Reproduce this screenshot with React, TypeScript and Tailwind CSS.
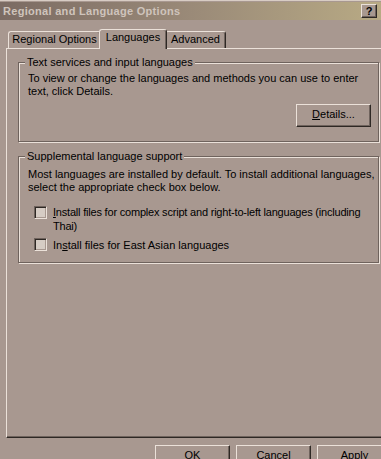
import React from 'react';

const face = 'bg-[#a89890]';

const Button: React.FC<{ children: React.ReactNode; className?: string }> = ({ children, className = '' }) => (
  <div
    className={`h-[23px] w-[75px] shrink-0 flex items-center justify-center pb-[2px] ${face} border border-t-[#ebe1d9] border-l-[#ebe1d9] border-b-[#2e2824] border-r-[#2e2824] shadow-[inset_-1px_-1px_0_#6f635d] ${className}`}
  >
    {children}
  </div>
);

const Checkbox: React.FC = () => (
  <div className="w-[13px] h-[13px] shrink-0 bg-[#d6ccc4] border border-t-[#6f635d] border-l-[#6f635d] border-b-[#ebe1d9] border-r-[#ebe1d9] shadow-[inset_1px_1px_0_#2e2824,inset_-1px_-1px_0_#a89890]" />
);

const GroupBox: React.FC<{ title: string; className?: string; children: React.ReactNode }> = ({ title, className = '', children }) => (
  <div className={`relative w-[361px] border border-[#6f635d] shadow-[inset_1px_1px_0_#ebe1d9,1px_1px_0_#ebe1d9] ${className}`}>
    <span className={`absolute left-[6px] top-[-7px] px-[2px] leading-[13px] ${face}`}>{title}</span>
    {children}
  </div>
);

const tabBase =
  'flex items-center justify-center rounded-t-[3px] border-t border-l border-t-[#ebe1d9] border-l-[#ebe1d9] border-r border-r-[#2e2824] shadow-[inset_-1px_0_0_#6f635d]';

export default function App() {
  return (
    <div
      className={`w-[381px] h-[459px] overflow-hidden ${face} text-[11px] text-black relative`}
      style={{ fontFamily: '"Liberation Sans", Arial, sans-serif' }}
    >
      <div className="h-[2px] border-t border-[#d8ccc4]" />
      {/* title bar */}
      <div className="h-[18px] flex items-center pl-[3px] bg-linear-to-r from-[#7b6b63] via-[#9a8a78] to-[#b8aa84]">
        <span className="font-bold text-[#cfc4bc] text-[11px] leading-none tracking-[0.3px]">Regional and Language Options</span>
        <div className="ml-auto mr-[4px] flex gap-[2px]">
          <div className="w-[16px] h-[14px] flex items-center justify-center font-bold text-[11px] leading-none bg-[#a89890] border border-t-[#ebe1d9] border-l-[#ebe1d9] border-b-[#2e2824] border-r-[#2e2824] shadow-[inset_-1px_-1px_0_#6f635d]">
            ?
          </div>
        </div>
      </div>

      <div className="pl-[6px]">
        {/* tabs */}
        <div className="flex items-end h-[19px] mt-[9px] pl-[2px]">
          <div className={`${tabBase} w-[93px] h-[17px] pb-[1px]`}>Regional Options</div>
          <div className={`${tabBase} ${face} relative z-10 w-[68px] h-[20px] -mx-[2px] -mb-[1px] pb-[4px]`}>Languages</div>
          <div className={`${tabBase} w-[61px] h-[17px] pb-[1px]`}>Advanced</div>
        </div>

        {/* page */}
        <div className="w-[390px] h-[390px] border-t border-l border-t-[#ebe1d9] border-l-[#ebe1d9] border-b border-b-[#2e2824] shadow-[inset_0_-1px_0_#6f635d] pl-[11px] pt-[13px]">
          <GroupBox title="Text services and input languages" className="h-[80px]">
            <div className="pl-[9px] pt-[9px] leading-[13px] whitespace-nowrap">
              To view or change the languages and methods you can use to enter
              <br />
              text, click Details.
            </div>
            <div className="flex justify-end pr-[7px] mt-[6px]">
              <Button>
                <span>
                  <span className="underline">D</span>etails...
                </span>
              </Button>
            </div>
          </GroupBox>

          <GroupBox title="Supplemental language support" className="h-[107px] mt-[14px]">
            <div className="pl-[9px] pt-[11px] leading-[13px] whitespace-nowrap">
              Most languages are installed by default. To install additional languages,
              <br />
              select the appropriate check box below.
            </div>
            <div className="flex items-start gap-[6px] pl-[15px] mt-[11px] leading-[14px] whitespace-nowrap">
              <div className="mt-[1px]">
                <Checkbox />
              </div>
              <div className="tracking-[-0.2px]">
                <span className="underline">I</span>nstall files for complex script and right-to-left languages (including
                <br />
                Thai)
              </div>
            </div>
            <div className="flex items-start gap-[6px] pl-[15px] mt-[5px] leading-[14px] whitespace-nowrap">
              <div>
                <Checkbox />
              </div>
              <div>
                In<span className="underline">s</span>tall files for East Asian languages
              </div>
            </div>
          </GroupBox>
        </div>

        {/* dialog buttons */}
        <div className="flex gap-[6px] pl-[149px] mt-[7px]">
          <Button>OK</Button>
          <Button>Cancel</Button>
          <Button>Apply</Button>
        </div>
      </div>
    </div>
  );
}
